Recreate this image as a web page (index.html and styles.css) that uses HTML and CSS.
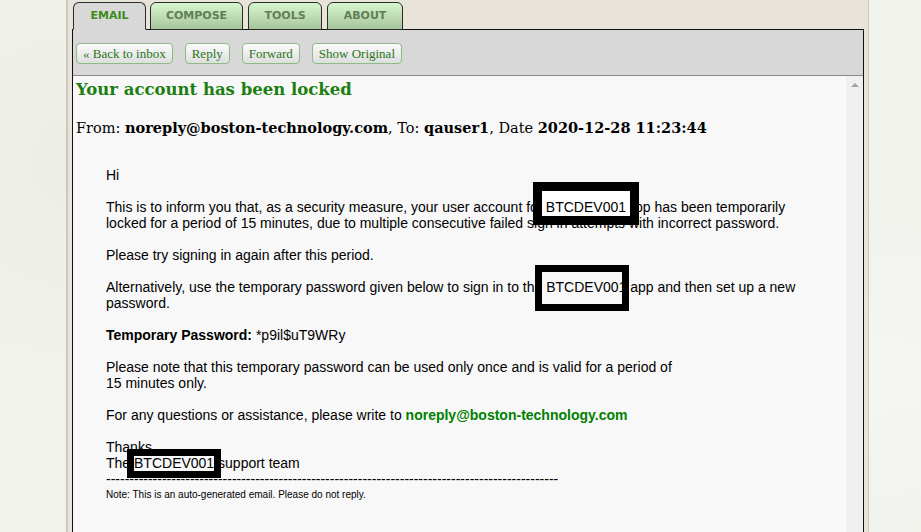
FILE: index.html
```html
<!DOCTYPE html>
<html lang="en">
<head>
    <meta charset="UTF-8">
    <meta name="viewport" content="width=device-width, initial-scale=1.0">
    <title>Webmail - Your account has been locked</title>
    <link rel="stylesheet" href="styles.css">
</head>
<body>

    <div class="page">
        <!-- Top navigation tabs -->
        <ul class="tabs">
            <li class="tab active">EMAIL</li>
            <li class="tab tab-compose">COMPOSE</li>
            <li class="tab tab-tools">TOOLS</li>
            <li class="tab tab-about">ABOUT</li>
        </ul>

        <div class="panel">
            <div class="toolbar">
                <button type="button">&laquo; Back to inbox</button>
                <button type="button">Reply</button>
                <button type="button">Forward</button>
                <button type="button">Show Original</button>
            </div>

            <div class="viewer">
                <div class="message">
                    <h1>Your account has been locked</h1>
                    <p class="meta">From: <b>noreply@boston-technology.com</b>, To: <b>qauser1</b>, Date <b>2020-12-28 11:23:44</b></p>

                    <!-- Email body -->
                    <div class="mail-body">
                        <p>Hi</p>
                        <p>This is to inform you that, as a security measure, your user account fo<span class="mark mark-fill">BTCDEV001</span>pp has been temporarily locked for a period of 15 minutes, due to multiple consecutive failed sign in attempts with incorrect password.</p>
                        <p>Please try signing in again after this period.</p>
                        <p>Alternatively, use the temporary password given below to sign in to the <span class="mark mark-wide">BTCDEV001</span> app and then set up a new password.</p>
                        <p><b>Temporary Password:</b> *p9il$uT9WRy</p>
                        <p>Please note that this temporary password can be used only once and is valid for a period of<br>15 minutes only.</p>
                        <p>For any questions or assistance, please write to <a href="#">noreply@boston-technology.com</a></p>
                        <p class="signoff">Thanks,<br>The <span class="mark mark-tight">BTCDEV001</span> support team<br>-------------------------------------------------------------------------------------------------</p>
                        <p class="note">Note: This is an auto-generated email. Please do not reply.</p>
                    </div>
                </div>

                <div class="scrollbar">
                    <span class="arrow-up"></span>
                </div>
            </div>
        </div>
    </div>

</body>
</html>
```

FILE: styles.css
```css
/* General Styles */
body {
    margin: 0;
    padding: 0;
    background-color: #f2f2ed;
    background-image:
        radial-gradient(ellipse at 20% 30%, #ecebe5 0, transparent 40%),
        radial-gradient(ellipse at 95% 70%, #f5f5f1 0, transparent 35%);
    font-family: "DejaVu Serif", Georgia, serif;
    overflow: hidden;
}

.page {
    width: 792px;
    min-height: 100vh;
    margin-left: 66px;
    padding: 2px 4px 0 4px;
    background-color: #e8e4da;
    border-left: 2px solid #cdc8be;
    border-right: 1px solid #cdc8be;
}

/* Tabs */
.tabs {
    display: flex;
    list-style: none;
    margin: 0 0 0 1px;
    padding: 0;
    position: relative;
    z-index: 1;
}

.tab {
    height: 26px;
    line-height: 26px;
    margin-right: 4px;
    text-align: center;
    font-family: "DejaVu Sans", Verdana, sans-serif;
    font-weight: bold;
    font-size: 11px;
    color: #5f7f57;
    background: linear-gradient(#d6f6ce, #a7c59b);
    border: 1px solid #2b2b2b;
    border-radius: 6px 6px 0 0;
}

.tab.active {
    width: 71px;
    color: #3c8c1c;
    background: #d8d8d8;
    border-bottom: 1px solid #d8d8d8;
}

.tab-compose {
    width: 91px;
    margin-right: 5px;
}

.tab-tools {
    width: 72px;
    margin-right: 5px;
}

.tab-about {
    width: 74px;
}

/* Panel */
.panel {
    border: 1px solid #111;
    border-bottom: none;
    margin-top: -1px;
}

.toolbar {
    display: flex;
    gap: 12px;
    padding: 13px 3px 11px;
    background-color: #d8d8d8;
    border-bottom: 1px solid #8a8a8a;
}

.toolbar button {
    height: 21px;
    padding: 0 6px;
    font-family: "Liberation Serif", "Times New Roman", serif;
    font-size: 13px;
    color: #2a761a;
    background: linear-gradient(#fbfbfb, #dedede);
    border: 1px solid #8cbc84;
    border-radius: 4px;
    cursor: pointer;
}

.viewer {
    display: flex;
    background-color: #f8f8f8;
    height: 460px;
}

.message {
    flex: 1;
    padding: 0 3px;
}

.scrollbar {
    width: 17px;
    background-color: #f0f0f0;
    display: flex;
    justify-content: center;
}

.arrow-up {
    width: 0;
    height: 0;
    margin-top: 7px;
    border-left: 4px solid transparent;
    border-right: 4px solid transparent;
    border-bottom: 4px solid #a3a3a3;
}

h1 {
    margin: 2px 0 0;
    font-size: 16.5px;
    line-height: 24px;
    color: #1b7f12;
}

.meta {
    margin: 16px 0 0;
    font-size: 14.5px;
    line-height: 20px;
    color: #000;
}

/* Email body */
.mail-body {
    padding: 13px 30px 0;
    font-family: "Liberation Sans", Arial, sans-serif;
    font-size: 14px;
    line-height: 16px;
    color: #000;
}

.mail-body p {
    margin: 16px 0;
}

.mail-body a {
    color: #008000;
    font-weight: bold;
    text-decoration: none;
}

.mail-body .signoff {
    margin-bottom: 0;
}

.mail-body .note {
    margin-top: 2px;
    font-size: 10px;
    line-height: 12px;
}

/* Redaction frames drawn over the screenshot */
.mark {
    position: relative;
}

.mark-fill {
    padding: 8px 4px 1px;
    margin-left: -5px;
    margin-right: -4px;
    background-color: #fff;
    border: 9px solid #000;
}

.mark-wide::after,
.mark-tight::after {
    content: "";
    position: absolute;
    border: 7px solid #000;
}

.mark-wide::after {
    left: -11px;
    right: -3px;
    top: -14px;
    bottom: -16px;
}

.mark-tight::after {
    left: -7px;
    right: -7px;
    top: -6px;
    bottom: -7px;
}
```
